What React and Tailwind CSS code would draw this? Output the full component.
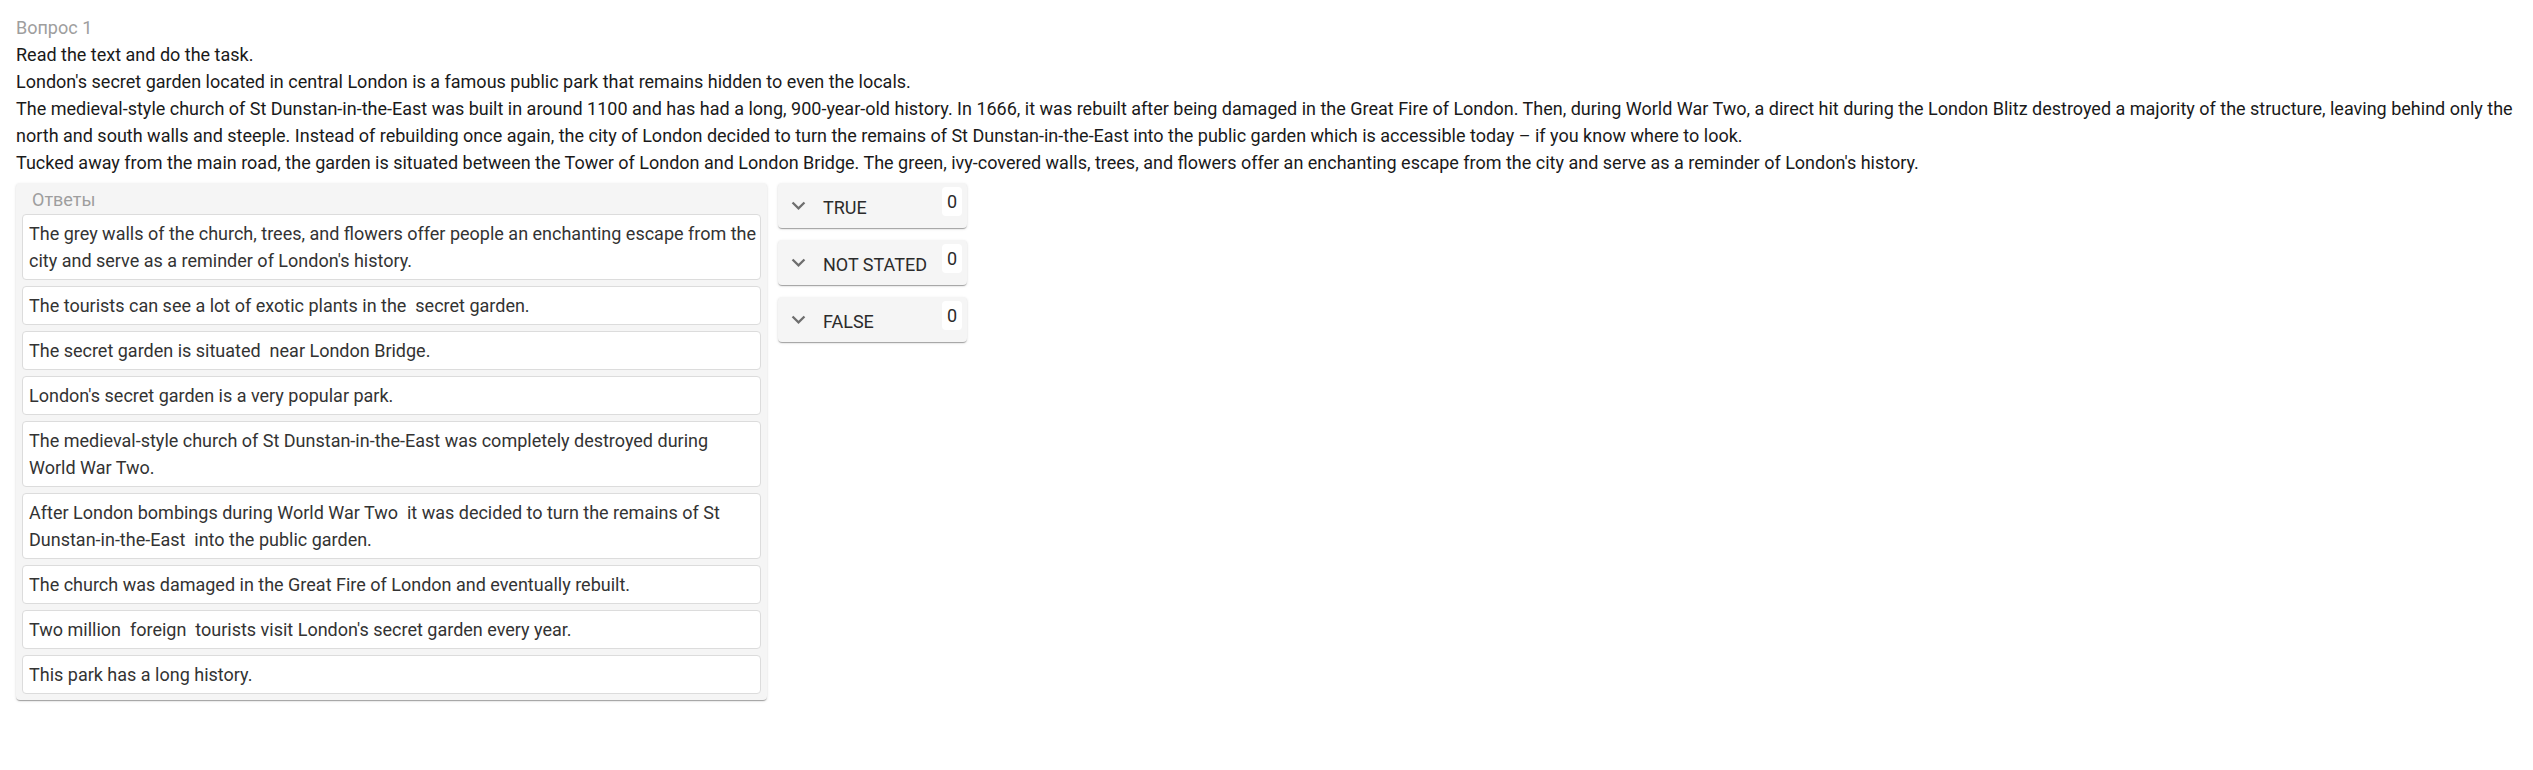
import React from "react";

const answers = [
  "The grey walls of the church, trees, and flowers offer people an enchanting escape from the city and serve as a reminder of London's history.",
  "The tourists can see a lot of exotic plants in the  secret garden.",
  "The secret garden is situated  near London Bridge.",
  "London's secret garden is a very popular park.",
  "The medieval-style church of St Dunstan-in-the-East was completely destroyed during World War Two.",
  "After London bombings during World War Two  it was decided to turn the remains of St Dunstan-in-the-East  into the public garden.",
  "The church was damaged in the Great Fire of London and eventually rebuilt.",
  "Two million  foreign  tourists visit London's secret garden every year.",
  "This park has a long history.",
];

const groups = ["TRUE", "NOT STATED", "FALSE"];

function ExpandMore() {
  return (
    <svg width="27" height="27" viewBox="0 0 24 24" className="shrink-0">
      <path fill="#6e6e6e" d="M16.59 8.59 12 13.17 7.41 8.59 6 10l6 6 6-6z" />
    </svg>
  );
}

function Group({ label, count }) {
  return (
    <div className="flex h-[45px] items-center rounded bg-[#f5f5f5] pl-[7px] pr-[5px] shadow-[0_2px_1px_-1px_rgba(0,0,0,0.2),0_1px_1px_0_rgba(0,0,0,0.14),0_1px_3px_0_rgba(0,0,0,0.12)]">
      <ExpandMore />
      <span className="ml-[11px] mt-[4px] text-[#2b2b2b]">{label}</span>
      <span className="mb-auto ml-auto mt-[4px] h-[29px] rounded-sm bg-white px-[5px] leading-[29px] text-[#2b2b2b]">
        {count}
      </span>
    </div>
  );
}

export default function App() {
  return (
    <div className="min-h-screen bg-white px-4 pt-[14px] font-['Roboto',sans-serif] text-[18px] leading-[27px] text-[#1a1a1a]">
      <div className="text-[#9e9e9e]">Вопрос 1</div>
      <p>Read the text and do the task.</p>
      <p>London's secret garden located in central London is a famous public park that remains hidden to even the locals.</p>
      <p>
        The medieval-style church of St Dunstan-in-the-East was built in around 1100 and has had a long, 900-year-old history. In 1666, it was rebuilt after being damaged in the Great Fire of London. Then, during World War Two, a direct hit during the London Blitz destroyed a majority of the structure, leaving behind only the north and south walls and steeple. Instead of rebuilding once again, the city of London decided to turn the remains of St Dunstan-in-the-East into the public garden which is accessible today – if you know where to look.
      </p>
      <p>
        Tucked away from the main road, the garden is situated between the Tower of London and London Bridge. The green, ivy-covered walls, trees, and flowers offer an enchanting escape from the city and serve as a reminder of London's history.
      </p>

      <div className="mt-[7px] flex items-start gap-[11px]">
        <div className="w-[751px] rounded bg-[#f5f5f5] px-[6px] pb-[6px] pt-[3px] shadow-[0_2px_1px_-1px_rgba(0,0,0,0.2),0_1px_1px_0_rgba(0,0,0,0.14),0_1px_3px_0_rgba(0,0,0,0.12)]">
          <div className="pl-[10px] text-[#9e9e9e]">Ответы</div>
          <div className="mt-[1px] flex flex-col gap-[6px]">
            {answers.map((a, i) => (
              <div
                key={i}
                className="whitespace-pre-wrap rounded border border-[#dcdcdc] bg-white py-[5px] pl-[6px] pr-[1px] text-[#333]"
              >
                {a}
              </div>
            ))}
          </div>
        </div>

        <div className="flex w-[189px] flex-col gap-[12px]">
          {groups.map((g) => (
            <Group key={g} label={g} count={0} />
          ))}
        </div>
      </div>
    </div>
  );
}
